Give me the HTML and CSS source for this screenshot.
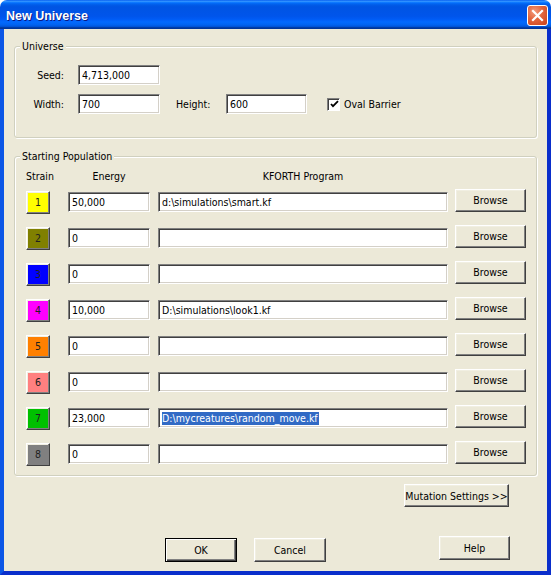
FILE: index.html
```html
<!DOCTYPE html>
<html>
<head>
<meta charset="utf-8">
<title>New Universe</title>
<link rel="stylesheet" href="styles.css">
</head>
<body>
<div class="window">
  <div class="titlebar">
    <span class="title">New Universe</span>
    <span class="close"><svg width="13" height="13" viewBox="0 0 13 13"><path d="M2 2 L11 11 M11 2 L2 11" stroke="#fff" stroke-width="2.2" stroke-linecap="square"/></svg></span>
  </div>
  <div class="client">
    <div class="group universe">
      <span class="legend">Universe</span>
      <div class="urow">
        <span class="lbl">Seed:</span>
        <div class="field w82">4,713,000</div>
      </div>
      <div class="urow gap">
        <span class="lbl">Width:</span>
        <div class="field w82">700</div>
        <span class="lbl2">Height:</span>
        <div class="field w81">600</div>
        <span class="check"><svg width="9" height="9" viewBox="0 0 9 9"><path d="M1 4 L3 6.2 L8 1.2" stroke="#000" stroke-width="1.8" fill="none"/></svg></span>
        <span class="check-text">Oval Barrier</span>
      </div>
    </div>

    <div class="group population">
      <span class="legend">Starting Population</span>
      <div class="head">
        <span class="h-strain">Strain</span>
        <span class="h-energy">Energy</span>
        <span class="h-prog">KFORTH Program</span>
      </div>
      <div class="prow first">
        <div class="sbtn c1">1</div>
        <div class="field energy">50,000</div>
        <div class="field prog">d:\simulations\smart.kf</div>
        <div class="btn browse">Browse</div>
      </div>
      <div class="prow">
        <div class="sbtn c2">2</div>
        <div class="field energy">0</div>
        <div class="field prog"></div>
        <div class="btn browse">Browse</div>
      </div>
      <div class="prow">
        <div class="sbtn c3">3</div>
        <div class="field energy">0</div>
        <div class="field prog"></div>
        <div class="btn browse">Browse</div>
      </div>
      <div class="prow">
        <div class="sbtn c4">4</div>
        <div class="field energy">10,000</div>
        <div class="field prog">D:\simulations\look1.kf</div>
        <div class="btn browse">Browse</div>
      </div>
      <div class="prow">
        <div class="sbtn c5">5</div>
        <div class="field energy">0</div>
        <div class="field prog"></div>
        <div class="btn browse">Browse</div>
      </div>
      <div class="prow">
        <div class="sbtn c6">6</div>
        <div class="field energy">0</div>
        <div class="field prog"></div>
        <div class="btn browse">Browse</div>
      </div>
      <div class="prow">
        <div class="sbtn c7">7</div>
        <div class="field energy">23,000</div>
        <div class="field prog"><span class="sel">D:\mycreatures\random_move.kf</span></div>
        <div class="btn browse">Browse</div>
      </div>
      <div class="prow">
        <div class="sbtn c8">8</div>
        <div class="field energy">0</div>
        <div class="field prog"></div>
        <div class="btn browse">Browse</div>
      </div>
    </div>

    <div class="mutrow">
      <div class="btn mutation">Mutation Settings &gt;&gt;</div>
    </div>

    <div class="btnrow">
      <div class="btn ok">OK</div>
      <div class="btn cancel">Cancel</div>
      <div class="btn help">Help</div>
    </div>
  </div>
</div>
</body>
</html>
```

FILE: styles.css
```css
* { box-sizing: border-box; }

body {
  margin: 0;
  background: #ffffff;
  font-family: "DejaVu Sans Condensed", "DejaVu Sans", "Liberation Sans", sans-serif;
  font-size: 10.5px;
  color: #000;
}

.window {
  width: 551px;
  height: 575px;
  display: flex;
  flex-direction: column;
}

.titlebar {
  height: 29px;
  flex: none;
  display: flex;
  align-items: center;
  padding: 0 3px 0 6px;
  border-radius: 7px 7px 0 0;
  background: linear-gradient(to bottom,
    #0058EE 0%, #3593FF 4%, #288EFF 6%, #127DFF 8%, #036FFC 10%,
    #0262EE 14%, #0057E5 20%, #0054E3 24%, #0055EB 56%, #005BF5 66%,
    #026AFE 76%, #0062EF 86%, #0052D6 92%, #0040AB 94%, #003092 100%);
}

.title {
  flex: 1;
  color: #fff;
  font-family: "Liberation Sans", Arial, sans-serif;
  font-weight: bold;
  font-size: 12.5px;
  padding-top: 2px;
  text-shadow: 1px 1px 0 #0A1883;
}

.close {
  width: 21px;
  height: 21px;
  margin-top: 2px;
  border: 1px solid #fff;
  border-radius: 3px;
  display: flex;
  align-items: center;
  justify-content: center;
  background: radial-gradient(circle at 35% 30%, #F39C7E 0%, #E2643C 45%, #C8411A 100%);
}

.client {
  flex: 1;
  background: #ECE9D8;
  border-style: solid;
  border-width: 0 4px 4px 4px;
  border-color: #0843D9 #0A2ECB #0A2ECB #0B56E6;
  padding: 0 10px;
  display: flex;
  flex-direction: column;
}

.group {
  position: relative;
  border: 1px solid #D0D0BF;
  border-radius: 3px;
  box-shadow: inset 1px 1px 0 #fff, 1px 1px 0 #fff;
}

.legend {
  position: absolute;
  top: -7px;
  left: 5px;
  padding: 0 2px;
  line-height: 13px;
  background: #ECE9D8;
  white-space: nowrap;
}

/* Universe */
.universe {
  margin-top: 17px;
  height: 92px;
  flex: none;
  padding-top: 18px;
}

.urow {
  display: flex;
  align-items: center;
  height: 20px;
}

.urow.gap { margin-top: 9px; }

.lbl {
  width: 49px;
  margin-right: 14px;
  text-align: right;
}

.lbl2 {
  width: 50px;
  margin-left: 16px;
}

.w82 { width: 82px; }
.w81 { width: 81px; }

.check {
  width: 13px;
  height: 13px;
  margin-left: 20px;
  background: #fff;
  border-style: solid;
  border-width: 1px;
  border-color: #808080 #fff #fff #808080;
  box-shadow: inset 1px 1px 0 #404040;
  display: flex;
  align-items: center;
  justify-content: center;
  padding: 1px 0 0 1px;
}

.check-text { margin-left: 4px; }

/* Text fields */
.field {
  height: 20px;
  background: #fff;
  border-style: solid;
  border-width: 1px;
  border-color: #808080 #fff #fff #808080;
  box-shadow: inset 1px 1px 0 #404040, inset -1px -1px 0 #D4D0C8;
  padding: 0 3px;
  line-height: 18px;
  white-space: nowrap;
  overflow: hidden;
}

.sel {
  background: #316AC5;
  color: #fff;
  padding: 0 1px 1px 0;
}

/* Population */
.population {
  margin-top: 18px;
  height: 320px;
  flex: none;
  padding: 13px 0 0 11px;
}

.head {
  display: flex;
  height: 13px;
  line-height: 13px;
  white-space: nowrap;
}

.h-strain { width: 24px; margin-right: 18px; }
.h-energy { width: 82px; margin-right: 8px; text-align: center; }
.h-prog { width: 290px; text-align: center; }

.prow {
  display: flex;
  align-items: center;
  height: 24px;
  margin-top: 12px;
}

.prow.first { margin-top: 7px; }

.sbtn {
  width: 24px;
  height: 23px;
  margin-right: 18px;
  border-style: solid;
  border-width: 1px;
  border-color: #fff #404040 #404040 #fff;
  box-shadow: inset -1px -1px 0 #808080, inset 1px 1px 0 #F1EFE2;
  display: flex;
  align-items: center;
  justify-content: center;
  color: #202020;
}

.c1 { background: #FFFF00; }
.c2 { background: #808000; }
.c3 { background: #0000FF; }
.c4 { background: #FF00FF; }
.c5 { background: #FF8000; }
.c6 { background: #FF8080; }
.c7 { background: #00C000; }
.c8 { background: #808080; }

.energy { width: 82px; margin-right: 8px; }
.prog { width: 290px; margin-right: 7px; }

/* Buttons */
.btn {
  background: #ECE9D8;
  border-style: solid;
  border-width: 1px;
  border-color: #fff #404040 #404040 #fff;
  box-shadow: inset -1px -1px 0 #808080, inset 1px 1px 0 #F1EFE2;
  display: flex;
  align-items: center;
  justify-content: center;
  white-space: nowrap;
}

.browse {
  width: 71px;
  height: 23px;
  margin-top: -4px;
}

.mutrow {
  display: flex;
  justify-content: flex-end;
  padding-right: 28px;
  margin-top: 8px;
}

.mutation {
  width: 105px;
  height: 23px;
}

.btnrow {
  display: flex;
  align-items: flex-start;
  margin-top: 31px;
}

.ok {
  width: 72px;
  height: 24px;
  margin-left: 151px;
  border: 1px solid #000;
  box-shadow: inset 1px 1px 0 #fff, inset -1px -1px 0 #404040, inset -2px -2px 0 #808080;
}

.cancel {
  width: 72px;
  height: 24px;
  margin-left: 17px;
}

.help {
  width: 71px;
  height: 24px;
  margin-left: auto;
  margin-right: 27px;
  margin-top: -2px;
}
```
